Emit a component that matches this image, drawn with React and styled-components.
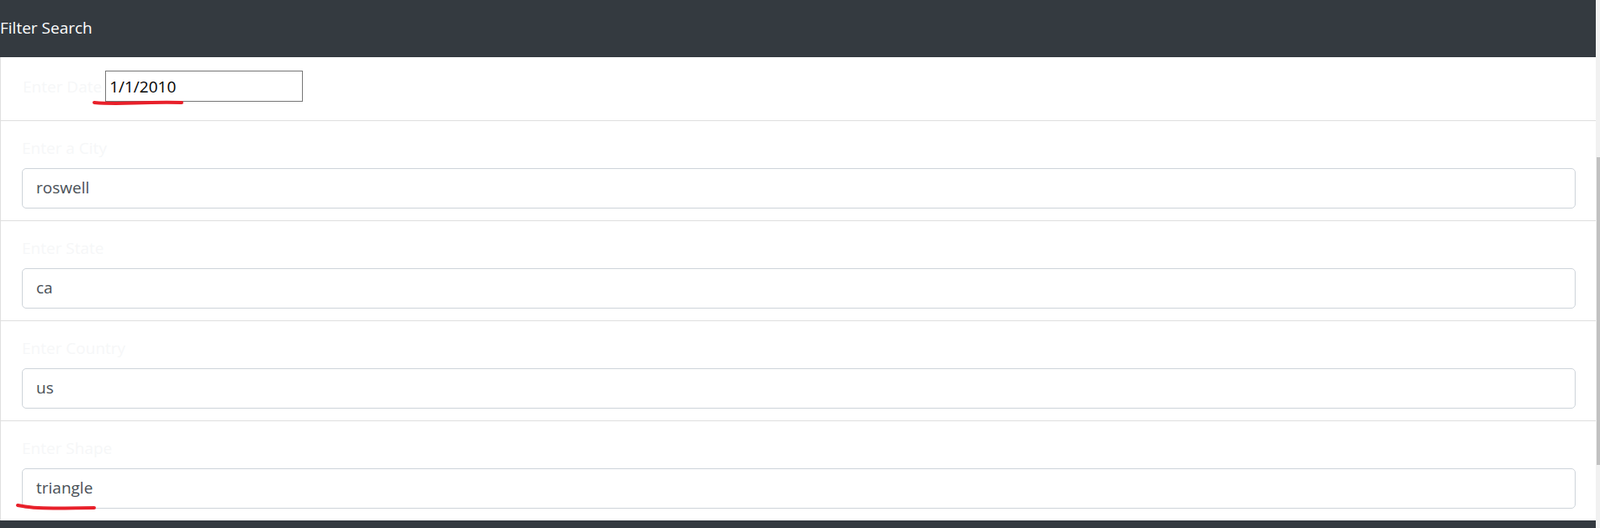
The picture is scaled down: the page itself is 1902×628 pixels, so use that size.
import React from "react"
import styled, { createGlobalStyle } from "styled-components"

const GlobalStyle = createGlobalStyle`
  html, body {
    margin: 0;
    padding: 0;
    overflow: hidden;
    background: #ffffff;
  }
  body {
    font-family: "Open Sans", "Noto Sans", "Liberation Sans", sans-serif;
  }
  * {
    box-sizing: border-box;
  }
`

const Page = styled.div`
  display: flex;
  height: 628px;
  width: 1902px;
`

const Main = styled.div`
  flex: 1;
  display: flex;
  flex-direction: column;
  position: relative;
`

const Header = styled.div`
  height: 68px;
  background: #343a40;
  color: #ffffff;
  font-size: 19px;
  display: flex;
  align-items: center;
  padding-bottom: 2px;
`

const List = styled.div`
  border-left: 1px solid #dfdfdf;
  display: flex;
  flex-direction: column;
`

const Item = styled.div`
  border-bottom: 1px solid #dfdfdf;
  padding: ${(p) => (p.inline ? "16px 24px 22px 26px" : "17px 24px 14px 25px")};
  display: ${(p) => (p.inline ? "flex" : "block")};
  align-items: baseline;

  &:last-child {
    border-bottom: none;
  }
`

const Label = styled.label`
  display: block;
  font-size: 19px;
  line-height: 30px;
  color: #f6f7f8;
  margin-bottom: ${(p) => (p.inline ? "0" : "9px")};
  margin-right: ${(p) => (p.inline ? "4px" : "0")};
`

const DateInput = styled.input`
  width: 235px;
  height: 37px;
  border: 1px solid #767676;
  border-radius: 0;
  padding: 1px 4px 0;
  font-family: inherit;
  font-size: 19px;
  color: #000000;
  outline: none;
`

const TextInput = styled.input`
  display: block;
  width: 100%;
  height: 48px;
  border: 1px solid #ced4da;
  border-radius: 5px;
  padding: 0 16px 2px;
  font-family: inherit;
  font-size: 19px;
  color: #495057;
  background: #ffffff;
  outline: none;
`

const Footer = styled.div`
  flex: 1;
  background: #343a40;
`

const Track = styled.div`
  width: 5px;
  background: #f1f1f1;
  position: relative;
`

const Thumb = styled.div`
  position: absolute;
  left: 1px;
  right: 0;
  top: 187px;
  height: 366px;
  background: #c1c1c1;
`

const Marks = styled.svg`
  position: absolute;
  left: 0;
  top: 0;
  pointer-events: none;
`

const fields = [
  { label: "Enter a City", value: "roswell" },
  { label: "Enter State", value: "ca" },
  { label: "Enter Country", value: "us" },
  { label: "Enter Shape", value: "triangle" },
]

export default function App() {
  return (
    <>
      <GlobalStyle />
      <Page>
        <Main>
          <Header>Filter Search</Header>
          <List>
            <Item inline>
              <Label inline>Enter Date</Label>
              <DateInput defaultValue="1/1/2010" />
            </Item>
            {fields.map((f) => (
              <Item key={f.label}>
                <Label>{f.label}</Label>
                <TextInput defaultValue={f.value} />
              </Item>
            ))}
          </List>
          <Footer />
          {/* red hand-drawn underlines */}
          <Marks width="300" height="628">
            <path
              d="M112 122 Q130 123.5 160 122.5 T216 122"
              stroke="#e8202a"
              strokeWidth="4"
              strokeLinecap="round"
              fill="none"
            />
            <path
              d="M21 601 Q40 605 70 604.5 T112 604"
              stroke="#e8202a"
              strokeWidth="4"
              strokeLinecap="round"
              fill="none"
            />
          </Marks>
        </Main>
        <Track>
          <Thumb />
        </Track>
      </Page>
    </>
  )
}
